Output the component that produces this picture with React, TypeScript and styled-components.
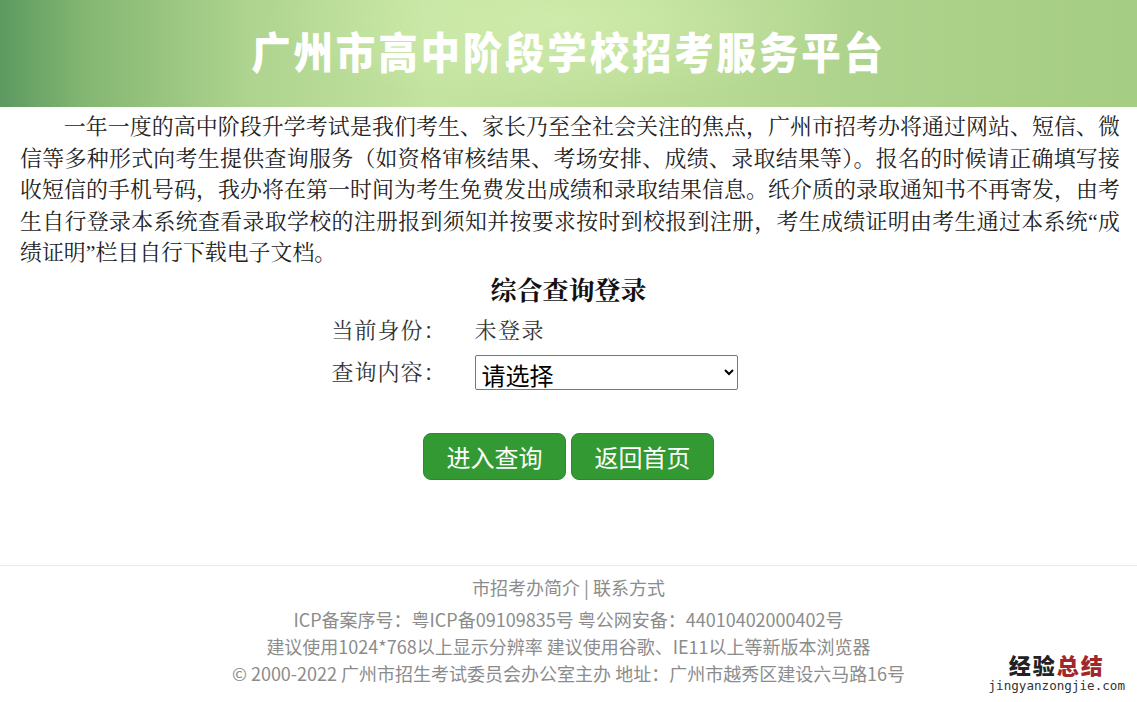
import React from "react";
import styled, { createGlobalStyle } from "styled-components";

const GlobalStyle = createGlobalStyle`
  body {
    margin: 0;
    background: #fff;
    font-family: "Liberation Serif", "Noto Serif CJK SC", "Noto Sans CJK SC", serif;
  }
`;

const Page = styled.div`
  position: relative;
  width: 1137px;
  height: 702px;
  overflow: hidden;
  display: flex;
  flex-direction: column;
`;

const Banner = styled.header`
  height: 107px;
  box-sizing: border-box;
  padding-bottom: 8px;
  display: flex;
  align-items: center;
  justify-content: center;
  background:
    radial-gradient(ellipse 420px 120px at 560px 20px, rgba(214, 240, 178, 0.7), rgba(214, 240, 178, 0) 70%),
    linear-gradient(90deg, #5c9a60 0%, #86b873 8%, #aed48f 22%, #c3e3a0 38%, #bcdd98 55%, #aed38c 75%, #a6cd84 100%);
`;

const Title = styled.h1`
  margin: 0;
  color: #fff;
  font-family: "Noto Sans CJK SC", sans-serif;
  font-weight: 900;
  font-size: 42px;
  letter-spacing: 3px;
  transform: scale(0.94, 1.04);
`;

const Intro = styled.p`
  margin: 4px 0 0;
  padding: 0 17px 0 20px;
  font-size: 21.9px;
  line-height: 31.5px;
  text-indent: 2em;
  text-align: justify;
  color: #222;
`;

const LoginBox = styled.section`
  display: flex;
  flex-direction: column;
  align-items: center;
  margin-top: 7px;
`;

const BoxTitle = styled.h2`
  margin: 0;
  font-size: 26px;
  line-height: 32px;
  font-weight: bold;
  color: #111;
`;

const FormGrid = styled.div`
  display: grid;
  grid-template-columns: 143px 263px;
  row-gap: 7px;
  margin-top: 5px;
  margin-left: -68px;
`;

const Label = styled.div`
  font-size: 22px;
  line-height: 35px;
  color: #333;
  letter-spacing: 1px;
`;

const Value = styled.div`
  font-size: 22px;
  line-height: 35px;
  color: #333;
  letter-spacing: 1.5px;
`;

const Select = styled.select`
  width: 263px;
  height: 35px;
  font-size: 24px;
  font-family: "Noto Sans CJK SC", sans-serif;
  color: #000;
  border: 1px solid #767676;
  border-radius: 2px;
  background: #fff;
  padding: 0 2px;
`;

const Actions = styled.div`
  display: flex;
  gap: 5px;
  margin-top: 43px;
`;

const GreenButton = styled.button`
  width: 143px;
  height: 47px;
  border: 1px solid #2c8a2c;
  border-radius: 8px;
  background: #339933;
  color: #fff;
  font-family: "Noto Sans CJK SC", sans-serif;
  font-size: 24px;
  cursor: pointer;
`;

const Footer = styled.footer`
  margin-top: auto;
  height: 137px;
  border-top: 1px solid #e6ebf0;
  display: flex;
  flex-direction: column;
  align-items: center;
  padding-top: 8px;
  box-sizing: border-box;
  color: #8c8c8c;
  font-family: "Noto Sans CJK SC", sans-serif;
  font-size: 18px;
`;

const FooterLine = styled.div<{ $gap?: number }>`
  line-height: 27px;
  margin-top: ${(p) => p.$gap ?? 0}px;
`;

const Watermark = styled.div`
  position: absolute;
  right: 12px;
  bottom: 10px;
  display: flex;
  flex-direction: column;
  align-items: center;
`;

const MarkWords = styled.div`
  font-family: "Noto Sans CJK SC", sans-serif;
  font-weight: 900;
  font-size: 22px;
  line-height: 22px;
  letter-spacing: 2px;
  color: #222;

  span {
    color: #a3262a;
  }
`;

const MarkUrl = styled.div`
  margin-top: 4px;
  font-family: "DejaVu Sans Mono", monospace;
  font-size: 12.6px;
  line-height: 13px;
  color: #333;
`;

export default function App() {
  return (
    <Page>
      <GlobalStyle />
      <Banner>
        <Title>广州市高中阶段学校招考服务平台</Title>
      </Banner>
      <Intro>
        一年一度的高中阶段升学考试是我们考生、家长乃至全社会关注的焦点，广州市招考办将通过网站、短信、微信等多种形式向考生提供查询服务（如资格审核结果、考场安排、成绩、录取结果等）。报名的时候请正确填写接收短信的手机号码，我办将在第一时间为考生免费发出成绩和录取结果信息。纸介质的录取通知书不再寄发，由考生自行登录本系统查看录取学校的注册报到须知并按要求按时到校报到注册，考生成绩证明由考生通过本系统“成绩证明”栏目自行下载电子文档。
      </Intro>
      <LoginBox>
        <BoxTitle>综合查询登录</BoxTitle>
        <FormGrid>
          <Label>当前身份：</Label>
          <Value>未登录</Value>
          <Label>查询内容：</Label>
          <Select defaultValue="">
            <option value="">请选择</option>
          </Select>
        </FormGrid>
        <Actions>
          <GreenButton>进入查询</GreenButton>
          <GreenButton>返回首页</GreenButton>
        </Actions>
      </LoginBox>
      <Footer>
        <FooterLine>市招考办简介 | 联系方式</FooterLine>
        <FooterLine $gap={5}>ICP备案序号：粤ICP备09109835号 粤公网安备：44010402000402号</FooterLine>
        <FooterLine>建议使用1024*768以上显示分辨率 建议使用谷歌、IE11以上等新版本浏览器</FooterLine>
        <FooterLine>© 2000-2022 广州市招生考试委员会办公室主办 地址：广州市越秀区建设六马路16号</FooterLine>
      </Footer>
      <Watermark>
        <MarkWords>
          经验<span>总结</span>
        </MarkWords>
        <MarkUrl>jingyanzongjie.com</MarkUrl>
      </Watermark>
    </Page>
  );
}
